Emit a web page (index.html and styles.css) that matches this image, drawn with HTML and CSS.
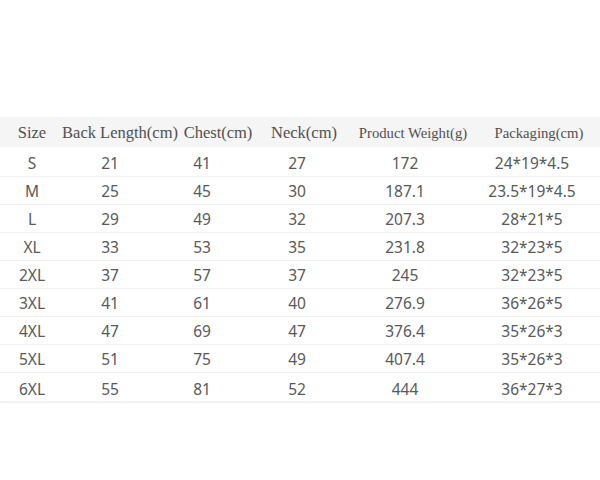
FILE: index.html
```html
<!DOCTYPE html>
<html>
<head>
<meta charset="utf-8">
<link rel="stylesheet" href="styles.css">
</head>
<body>
<div class="sheet">
  <div class="head">
    <div class="h">Size</div>
    <div class="h">Back Length(cm)</div>
    <div class="h">Chest(cm)</div>
    <div class="h">Neck(cm)</div>
    <div class="h small">Product Weight(g)</div>
    <div class="h small">Packaging(cm)</div>
  </div>
  <div class="row first"><span>S</span><span>21</span><span>41</span><span>27</span><span>172</span><span>24*19*4.5</span></div>
  <div class="row"><span>M</span><span>25</span><span>45</span><span>30</span><span>187.1</span><span>23.5*19*4.5</span></div>
  <div class="row"><span>L</span><span>29</span><span>49</span><span>32</span><span>207.3</span><span>28*21*5</span></div>
  <div class="row"><span>XL</span><span>33</span><span>53</span><span>35</span><span>231.8</span><span>32*23*5</span></div>
  <div class="row"><span>2XL</span><span>37</span><span>57</span><span>37</span><span>245</span><span>32*23*5</span></div>
  <div class="row"><span>3XL</span><span>41</span><span>61</span><span>40</span><span>276.9</span><span>36*26*5</span></div>
  <div class="row"><span>4XL</span><span>47</span><span>69</span><span>47</span><span>376.4</span><span>35*26*3</span></div>
  <div class="row"><span>5XL</span><span>51</span><span>75</span><span>49</span><span>407.4</span><span>35*26*3</span></div>
  <div class="row last"><span>6XL</span><span>55</span><span>81</span><span>52</span><span>444</span><span>36*27*3</span></div>
</div>
</body>
</html>
```

FILE: styles.css
```css
html, body {
  margin: 0;
  padding: 0;
  background: #ffffff;
}
body {
  width: 600px;
  height: 480px;
  overflow: hidden;
}
.sheet {
  padding-top: 117px;
  display: flex;
  flex-direction: column;
}
.head {
  display: grid;
  grid-template-columns: 64px 112px 84px 88px 130px 122px;
  height: 30px;
  background: #f5f5f5;
  align-items: center;
}
.h {
  display: flex;
  justify-content: center;
  white-space: nowrap;
  font-family: "Liberation Serif", "Times New Roman", serif;
  font-size: 16.5px;
  color: #505050;
  line-height: 30px;
  padding-top: 1px;
}
.h.small {
  font-size: 14.7px;
}
.row {
  display: grid;
  grid-template-columns: 64px 92px 92px 98px 118px 136px;
  height: 28px;
  padding-top: 1px;
  border-bottom: 1px solid #f0f0f0;
  box-sizing: border-box;
  align-items: center;
  font-family: "Noto Sans", "Open Sans", sans-serif;
  font-size: 15.5px;
  color: #595959;
}
.row span {
  display: flex;
  justify-content: center;
  white-space: nowrap;
  line-height: 26px;
}
.row.first {
  height: 30px;
  padding-top: 2px;
}
.row.last {
  height: 30px;
  padding-top: 3px;
  border-bottom: 2px solid #f2f2f2;
}
```
